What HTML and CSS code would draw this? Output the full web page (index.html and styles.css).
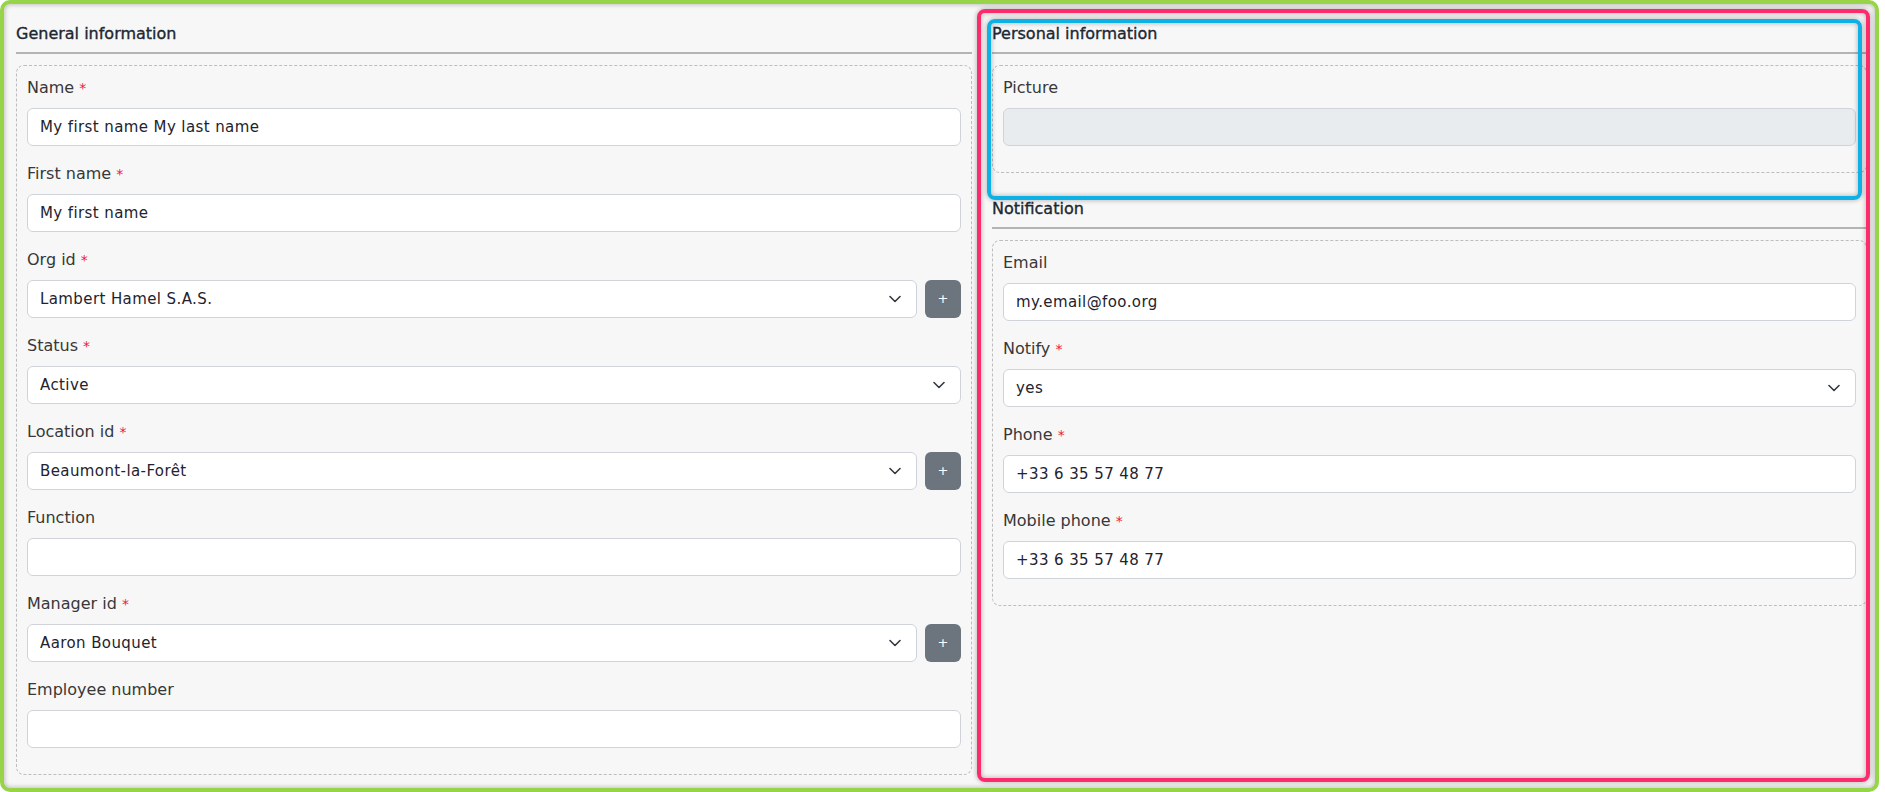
FILE: index.html
```html
<!DOCTYPE html>
<html lang="en">
<head>
<meta charset="utf-8">
<title>Employee form</title>
<link rel="stylesheet" href="styles.css">
</head>
<body>
<div class="page">
  <div class="col col-left">
    <section class="section">
      <h2 class="section-title">General information</h2>
      <div class="fieldset">
        <div class="group">
          <label class="label">Name <span class="req">*</span></label>
          <input class="control" type="text" value="My first name My last name">
        </div>
        <div class="group">
          <label class="label">First name <span class="req">*</span></label>
          <input class="control" type="text" value="My first name">
        </div>
        <div class="group">
          <label class="label">Org id <span class="req">*</span></label>
          <div class="input-row">
            <select class="control select"><option>Lambert Hamel S.A.S.</option></select>
            <button class="btn-add" type="button">+</button>
          </div>
        </div>
        <div class="group">
          <label class="label">Status <span class="req">*</span></label>
          <select class="control select"><option>Active</option></select>
        </div>
        <div class="group">
          <label class="label">Location id <span class="req">*</span></label>
          <div class="input-row">
            <select class="control select"><option>Beaumont-la-Forêt</option></select>
            <button class="btn-add" type="button">+</button>
          </div>
        </div>
        <div class="group">
          <label class="label">Function</label>
          <input class="control" type="text" value="">
        </div>
        <div class="group">
          <label class="label">Manager id <span class="req">*</span></label>
          <div class="input-row">
            <select class="control select"><option>Aaron Bouquet</option></select>
            <button class="btn-add" type="button">+</button>
          </div>
        </div>
        <div class="group">
          <label class="label">Employee number</label>
          <input class="control" type="text" value="">
        </div>
      </div>
    </section>
  </div>

  <div class="col col-right">
    <div class="hl hl-pink"></div>
    <section class="section section-personal">
      <div class="hl hl-blue"></div>
      <h2 class="section-title">Personal information</h2>
      <div class="fieldset">
        <div class="group">
          <label class="label">Picture</label>
          <div class="control control-disabled"></div>
        </div>
      </div>
    </section>
    <section class="section">
      <h2 class="section-title">Notification</h2>
      <div class="fieldset">
        <div class="group">
          <label class="label">Email</label>
          <input class="control" type="text" value="my.email@foo.org">
        </div>
        <div class="group">
          <label class="label">Notify <span class="req">*</span></label>
          <select class="control select"><option>yes</option></select>
        </div>
        <div class="group">
          <label class="label">Phone <span class="req">*</span></label>
          <input class="control" type="text" value="+33 6 35 57 48 77">
        </div>
        <div class="group">
          <label class="label">Mobile phone <span class="req">*</span></label>
          <input class="control" type="text" value="+33 6 35 57 48 77">
        </div>
      </div>
    </section>
  </div>
</div>
</body>
</html>
```

FILE: styles.css
```css
* {
  box-sizing: border-box;
}

body {
  margin: 0;
  background: #ffffff;
  font-family: "DejaVu Sans", "Liberation Sans", sans-serif;
}

.page {
  width: 1879px;
  height: 792px;
  border: 4px solid #98d448;
  border-radius: 10px;
  background: #f7f7f7;
  padding: 17px 8px 15px 12px;
  display: grid;
  grid-template-columns: 956fr 875fr;
  column-gap: 20px;
  box-shadow: inset 0 0 4px 1px rgba(0, 0, 0, 0.22);
}

.col {
  min-width: 0;
}

.col-right {
  position: relative;
}

.section {
  position: relative;
}

.section-personal {
  padding-bottom: 23px;
}

.section-title {
  margin: 0 0 11px;
  padding: 1px 0 6px;
  border-bottom: 2px solid #b4b4b4;
  font-size: 16px;
  line-height: 24px;
  font-weight: normal;
  -webkit-text-stroke: 0.35px #1d2733;
  color: #1d2733;
}

.fieldset {
  border: 1px dashed #bdbdbd;
  border-radius: 8px;
  padding: 10px 10px 10px;
}

.group {
  margin-bottom: 16px;
}

.label {
  display: block;
  margin-bottom: 8px;
  font-size: 16px;
  line-height: 24px;
  color: #383838;
}

.req {
  color: #f0173f;
  font-size: 14px;
}

.control {
  display: block;
  width: 100%;
  height: 38px;
  margin: 0;
  padding: 6px 12px;
  font-family: "DejaVu Sans", "Liberation Sans", sans-serif;
  font-size: 15px;
  line-height: 24px;
  letter-spacing: 0.4px;
  color: #22232e;
  background-color: #ffffff;
  border: 1px solid #d0d4da;
  border-radius: 6px;
  outline: none;
}

.control-disabled {
  background-color: #e9ecef;
}

.select {
  -webkit-appearance: none;
  appearance: none;
  padding-right: 36px;
  background-image: url("data:image/svg+xml,%3Csvg xmlns='http://www.w3.org/2000/svg' viewBox='0 0 12 8'%3E%3Cpath d='M1 1.5 6 6.5 11 1.5' fill='none' stroke='%23343a40' stroke-width='1.6' stroke-linecap='round' stroke-linejoin='round'/%3E%3C/svg%3E");
  background-repeat: no-repeat;
  background-position: right 15px center;
  background-size: 12px 8px;
}

.input-row {
  display: flex;
  gap: 8px;
}

.input-row .select {
  flex: 1 1 auto;
  min-width: 0;
}

.btn-add {
  flex: 0 0 36px;
  height: 38px;
  padding: 0;
  border: 0;
  border-radius: 6px;
  background: #6c757d;
  color: #ffffff;
  font-family: "DejaVu Sans", sans-serif;
  font-size: 13px;
  line-height: 38px;
}

.hl {
  position: absolute;
  border-width: 4px;
  border-style: solid;
  border-radius: 8px;
  pointer-events: none;
  box-shadow: 0 0 4px 1px rgba(0, 0, 0, 0.22), inset 0 0 4px 1px rgba(0, 0, 0, 0.22);
  z-index: 2;
}

.hl-pink {
  top: -12px;
  left: -15px;
  right: -3px;
  bottom: -7px;
  border-color: #fe2b6c;
}

.hl-blue {
  top: -2px;
  left: -5px;
  right: 5px;
  bottom: -4px;
  border-color: #0db1e6;
}
```
